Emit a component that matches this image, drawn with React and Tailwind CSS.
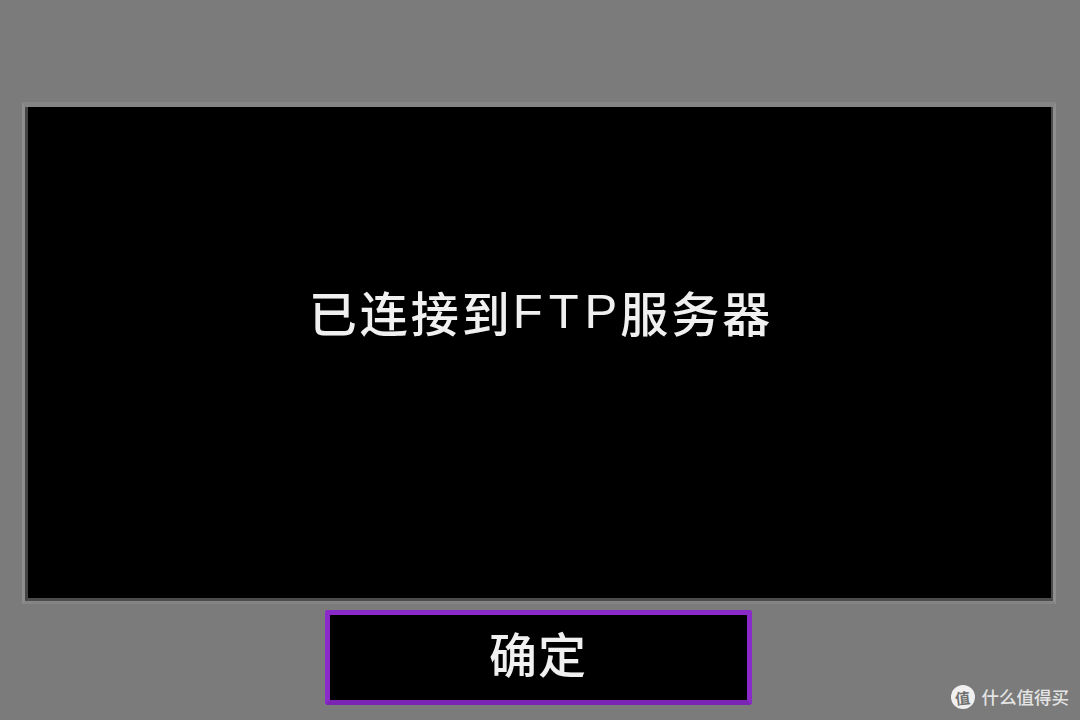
import React from "react";

const cjk = "font-['Noto_Sans_CJK_SC','Noto_Sans',sans-serif]";

const Watermark = () => {
  return (
    <div className="flex items-center gap-[7px] self-end mr-[-13px] -mt-[20px] text-[#e4e4e4]">
      <div className="w-[24px] h-[24px] rounded-full bg-[#f0f0f0] flex items-center justify-center">
        <span className={`${cjk} text-[15px] leading-none text-[#6f6f6f] font-bold -rotate-6`}>值</span>
      </div>
      <span className={`${cjk} text-[17.5px] leading-none font-medium`}>什么值得买</span>
    </div>
  );
};

const App = () => {
  return (
    <div className="w-[1080px] h-[720px] bg-[#7b7b7b] overflow-hidden flex flex-col pt-[102px] pl-[22px] pr-[24px]">
      {/* message panel */}
      <div className="h-[502px] border-t-[5px] border-l-[3px] border-r-[3px] border-b-[3px] border-t-[#858585] border-l-[#8e8e8e] border-r-[#8e8e8e] border-b-[#858585]">
        <div className="h-full bg-black border-l-[3px] border-r-[2px] border-b-[3px] border-l-[#444444] border-r-[#4c4c4c] border-b-[#4c4c4c] flex items-center justify-center pb-[83px]">
          <div className={`${cjk} text-[#f0f0f0] text-[48px] leading-none font-medium blur-[0.7px] flex items-center`}>
            <span className="tracking-[3px] ml-[3px]">已连接到</span>
            <span className="font-['Liberation_Sans',sans-serif] tracking-[6px] text-[49px] mr-[-3px]">FTP</span>
            <span className="tracking-[3px]">服务器</span>
          </div>
        </div>
      </div>

      {/* confirm button */}
      <div className="flex justify-center mt-[6px]">
        <div className="w-[427px] h-[95px] ml-[-2px] bg-black border-[5px] border-[#8a2bc9] border-b-[#7a24b4] rounded-[3px] flex items-center justify-center pb-[12px]">
          <span className={`${cjk} text-[#f0f0f0] text-[48px] leading-none font-medium tracking-[1px] blur-[0.7px]`}>确定</span>
        </div>
      </div>

      <Watermark />
    </div>
  );
};

export default App;
